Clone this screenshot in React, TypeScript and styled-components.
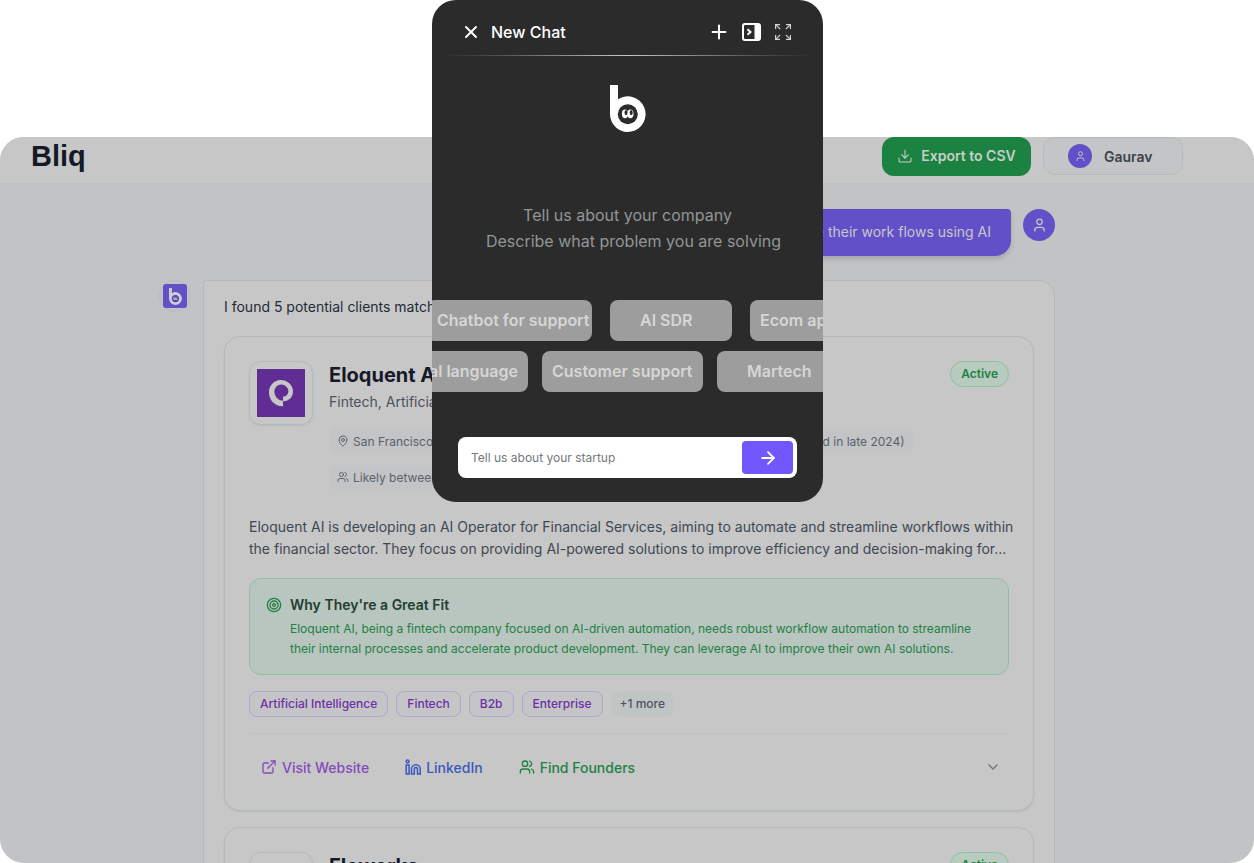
import React from "react";
import styled, { createGlobalStyle, css } from "styled-components";
import {
  ArrowRight,
  ChevronDown,
  Download,
  ExternalLink,
  MapPin,
  Plus,
  Target,
  Users,
  X,
} from "lucide-react";

const GlobalStyle = createGlobalStyle`
  *, *::before, *::after { box-sizing: border-box; }
  body { margin: 0; background: #ffffff; font-family: Inter, "Liberation Sans", sans-serif; }
  h1, h2, h3, p, ul { margin: 0; padding: 0; }
  button, input { font: inherit; }
  button { border: 0; padding: 0; background: none; color: inherit; cursor: pointer; }
  a { color: inherit; text-decoration: none; }
  svg { flex: none; display: block; }
`;

const Page = styled.div`
  position: relative;
  display: flex;
  flex-direction: column;
  height: 100vh;
  padding-top: 137px;
  overflow: hidden;
`;

const AppWindow = styled.div`
  flex: 1;
  min-height: 0;
  overflow: hidden;
  border-radius: 24px;
  background: #c2c3c5;
`;

const Header = styled.header`
  display: flex;
  align-items: flex-start;
  gap: 12px;
  height: 47px;
  padding: 0 71px 0 31px;
  background: #c7c7c7;
  border-bottom: 1px solid #bfc2c3;
`;

const Brand = styled.h1`
  flex: 1;
  color: #151a28;
  font: 700 29px/38px "Liberation Sans", sans-serif;
`;

const ExportButton = styled.button`
  display: flex;
  align-items: center;
  justify-content: center;
  gap: 8px;
  width: 149px;
  height: 39px;
  padding-bottom: 2px;
  border-radius: 12px;
  background: #1b8241;
  color: #c7cfc9;
  font-size: 14px;
  font-weight: 600;
`;

const AccountButton = styled.button`
  display: flex;
  align-items: center;
  gap: 12px;
  width: 140px;
  height: 38px;
  padding-left: 24px;
  border: 1px solid #b4bbbc;
  border-radius: 12px;
  background: #c4c5c6;
  color: #3c434c;
  font-size: 14px;
  font-weight: 600;
`;

const UserAvatar = styled.span<{ $size: number }>`
  flex: none;
  display: flex;
  align-items: center;
  justify-content: center;
  width: ${(p) => p.$size}px;
  height: ${(p) => p.$size}px;
  border-radius: 50%;
  background: #6250c8;
  color: #c7c7c7;
`;

const Scroller = styled.main`
  padding: 25px 40px 0 0;
`;

const Thread = styled.div`
  display: flex;
  flex-direction: column;
  gap: 24px;
  max-width: 896px;
  margin: 0 auto;
`;

const Message = styled.div<{ $mine?: boolean }>`
  display: flex;
  align-items: flex-start;
  justify-content: ${(p) => (p.$mine ? "flex-end" : "flex-start")};
  gap: 12px;
`;

const Bubble = styled.p`
  padding: 11px 20px 12px;
  border-radius: 16px 4px 16px 16px;
  background: #6250c8;
  box-shadow: 0 3px 5px rgba(70, 85, 85, 0.25);
  color: #c7c7c7;
  font-size: 14px;
  line-height: 24px;
`;

const BotAvatar = styled.span`
  flex: none;
  display: flex;
  align-items: center;
  justify-content: center;
  width: 32px;
  height: 32px;
  border: 1px solid #b7bbbe;
  border-radius: 50%;
`;

const BotTile = styled.span`
  display: flex;
  align-items: center;
  justify-content: center;
  width: 24px;
  height: 24px;
  border-radius: 3px;
  background: #6250c8;
`;

const Panel = styled.section`
  flex: 1;
  min-width: 0;
  padding: 14px 20px 20px;
  border: 1px solid #b1babb;
  border-radius: 4px 16px 16px 16px;
  background: #c7c7c7;
`;

const Intro = styled.p`
  margin-bottom: 17px;
  color: #242b36;
  font-size: 14px;
  line-height: 24px;
`;

const Card = styled.article`
  margin-bottom: 16px;
  padding: 24px;
  border: 1px solid #b1bbba;
  border-radius: 16px;
  background: #c7c7c7;
  box-shadow: 0 1px 2px rgba(70, 85, 85, 0.12);
`;

const CardTop = styled.div`
  display: flex;
  align-items: flex-start;
  gap: 16px;
`;

const LogoBox = styled.div`
  flex: none;
  display: flex;
  align-items: center;
  justify-content: center;
  width: 64px;
  height: 64px;
  border: 1px solid #b1bbba;
  border-radius: 12px;
  box-shadow: 0 1px 2px rgba(70, 85, 85, 0.12);
`;

const CardInfo = styled.div`
  flex: 1;
  min-width: 0;
`;

const CardTitle = styled.h2`
  color: #151a28;
  font-size: 20px;
  font-weight: 700;
  line-height: 28px;
`;

const CardSubtitle = styled.p`
  margin-bottom: 14px;
  color: #4a525c;
  font-size: 14px;
  line-height: 26px;
`;

const Facts = styled.ul`
  display: flex;
  flex-wrap: wrap;
  gap: 12px;
  list-style: none;
`;

const Fact = styled.li<{ $fill?: boolean }>`
  display: flex;
  align-items: center;
  gap: 4px;
  height: 24px;
  padding: 0 8px;
  border-radius: 6px;
  background: #c2c4c5;
  color: #5a626b;
  font-size: 12px;
  white-space: nowrap;
  ${(p) =>
    p.$fill &&
    css`
      justify-content: flex-end;
      width: 353px;
    `}
`;

const Status = styled.span`
  height: 26px;
  padding: 0 10px;
  border: 1px solid #8fc1a2;
  border-radius: 13px;
  background: #b7cbbf;
  color: #1e8043;
  font-size: 12px;
  font-weight: 600;
  line-height: 24px;
`;

const Summary = styled.p`
  margin-top: 27px;
  color: #3f4751;
  font-size: 14px;
  line-height: 22px;
  white-space: nowrap;
`;

const FitBox = styled.section`
  display: flex;
  gap: 8px;
  margin-top: 18px;
  padding: 16px 16px 15px;
  border: 1px solid #91bfa3;
  border-radius: 12px;
  background: #b9c5bf;
  color: #228145;

  > svg {
    margin-top: 2px;
  }
`;

const FitTitle = styled.h3`
  margin-bottom: 4px;
  color: #213f30;
  font-size: 14px;
  font-weight: 600;
  line-height: 20px;
`;

const FitText = styled.p`
  font-size: 12px;
  line-height: 20px;
  white-space: nowrap;
`;

const Chips = styled.ul`
  display: flex;
  gap: 8px;
  margin-top: 16px;
  list-style: none;
`;

const Chip = styled.li<{ $muted?: boolean }>`
  height: 26px;
  padding: 0 ${(p) => (p.$muted ? 8 : 10)}px;
  border: 1px solid ${(p) => (p.$muted ? "#c1c4c5" : "#b5a5cc")};
  border-radius: 8px;
  background: ${(p) => (p.$muted ? "#c1c4c5" : "#c4c5c6")};
  color: ${(p) => (p.$muted ? "#4c545e" : "#6c2fa6")};
  font-size: 12px;
  font-weight: 500;
  line-height: 24px;
`;

const CardActions = styled.footer`
  display: flex;
  align-items: center;
  gap: 12px;
  margin-top: 16px;
  padding: 15px 0 1px;
  border-top: 1px solid #bfc2c3;
`;

const ActionLink = styled.a<{ $tone: string }>`
  display: flex;
  align-items: center;
  gap: 5px;
  height: 36px;
  padding: 0 12px;
  color: ${(p) => p.$tone};
  font-size: 14px;
  font-weight: 500;
`;

const ExpandCard = styled.button`
  display: flex;
  align-items: center;
  justify-content: center;
  width: 32px;
  height: 36px;
  margin-left: auto;
  color: #6d747c;
`;

const Overlay = styled.div`
  position: absolute;
  inset: 0;
  display: flex;
  align-items: flex-start;
  justify-content: center;
  padding-left: 1px;
`;

const Dialog = styled.section`
  display: flex;
  flex-direction: column;
  width: 391px;
  overflow: hidden;
  border-radius: 24px;
  background: #2b2b2b;
  color: #ffffff;
`;

const DialogHeader = styled.header`
  display: flex;
  align-items: center;
  height: 55px;
  padding: 8px 30px 0 29px;
`;

const DialogTitle = styled.h2`
  flex: 1;
  margin-left: 10px;
  font-size: 16px;
  font-weight: 500;
  line-height: 24px;
`;

const IconButton = styled.button`
  display: flex;
  align-items: center;
  justify-content: center;
  width: 20px;
  height: 24px;
`;

const Tools = styled.div`
  display: flex;
  gap: 12px;
`;

const Rule = styled.div`
  height: 1px;
  margin: 0 12px;
  background: linear-gradient(90deg, #2b2b2b, #5c6165 20%, #c4c8c8 50%, #5c6165 80%, #2b2b2b);
`;

const DialogLogo = styled.div`
  display: flex;
  justify-content: center;
  padding-top: 29px;
`;

const Prompt = styled.div`
  margin-top: 70px;
  color: #919697;
  font-size: 16px;
  line-height: 26px;
  text-align: center;
`;

const PromptDetail = styled.p`
  padding-left: 12px;
`;

const Suggestions = styled.div<{ $shift: number; $gap: number }>`
  display: flex;
  gap: ${(p) => p.$gap}px;
  margin-left: -${(p) => p.$shift}px;
`;

const SuggestionArea = styled.div`
  display: flex;
  flex-direction: column;
  gap: 10px;
  margin-top: 46px;
`;

const Suggestion = styled.button<{ $width: number; $inset?: number }>`
  flex: none;
  width: ${(p) => p.$width}px;
  height: 41px;
  padding: 0 0 1px ${(p) => p.$inset ?? 10}px;
  border-radius: 8px;
  background: #9d9d9d;
  color: #d6d6d6;
  font-size: 16px;
  font-weight: 600;
  text-align: left;
  white-space: nowrap;
`;

const Composer = styled.form`
  display: flex;
  align-items: center;
  height: 41px;
  margin: 45px 26px 24px;
  padding: 4px;
  border-radius: 8px;
  background: #ffffff;
`;

const ComposerInput = styled.input`
  flex: 1;
  min-width: 0;
  padding: 0 9px;
  border: 0;
  outline: 0;
  background: transparent;
  color: #2b2b2b;
  font-size: 12px;

  &::placeholder {
    color: #74787b;
    opacity: 1;
  }
`;

const SendButton = styled.button`
  display: flex;
  align-items: center;
  justify-content: center;
  width: 51px;
  height: 33px;
  border-radius: 4px;
  background: #7257ff;
  color: #ffffff;
`;

const BliqMark = ({ width, height, color, hole }: { width: number; height: number; color: string; hole: string }) => (
  <svg width={width} height={height} viewBox="0 0 36 47" aria-hidden="true">
    <path d="M0 0h8v14.3A17.8 17.8 0 1 1 0 29.2z" fill={color} />
    <circle cx="17.8" cy="29.2" r="10" fill={hole} />
    <ellipse cx="15" cy="28.8" rx="3.1" ry="4.4" fill={color} />
    <ellipse cx="20.4" cy="28.8" rx="3.1" ry="4.4" fill={color} />
    <ellipse cx="16" cy="27.6" rx="1.5" ry="2.6" fill={hole} />
    <ellipse cx="21.2" cy="27.6" rx="1.5" ry="2.6" fill={hole} />
  </svg>
);

const PersonIcon = ({ size }: { size: number }) => (
  <svg width={size} height={size} viewBox="0 0 16 16" fill="none" stroke="currentColor" strokeWidth="1.4" aria-hidden="true">
    <circle cx="8" cy="4" r="2.9" />
    <path d="M3 14.500v-1.600A2.900 2.900 0 0 1 5.900 10h4.200A2.900 2.900 0 0 1 13 12.900v1.600" />
  </svg>
);

const EloquentLogo = () => (
  <svg width="48" height="48" viewBox="0 0 48 48" role="img" aria-label="Eloquent AI">
    <rect width="48" height="48" fill="#602d95" />
    <path
      fillRule="evenodd"
      fill="#c7c7c7"
      d="M26 37.3C18 37.5 12 31.3 12 23.6A12 12 0 0 1 36 22.3C36 28.5 31.5 32.5 26 32.2zM26 31.8V27.8C29.5 27.5 31.4 25.3 31.4 22.3A7 7 0 0 0 17.4 22.6C17.4 27.4 21.2 31.8 26 31.8z"
    />
  </svg>
);

const LinkedInIcon = () => (
  <svg width="16" height="16" viewBox="0 0 16 16" fill="none" stroke="currentColor" strokeWidth="1.5" aria-hidden="true">
    <circle cx="2.6" cy="2.4" r="1.4" />
    <path d="M1.2 5.900h2.900v9.200H1.200z" />
    <path d="M6.500 15.100V10.200a4.400 4.400 0 0 1 8.800 0v4.900h-2.800v-4.900a1.600 1.600 0 0 0-3.200 0v4.900z" />
  </svg>
);

const PanelIcon = () => (
  <svg width="19" height="18" viewBox="0 0 19 18" aria-hidden="true">
    <rect x="1" y="1" width="17" height="16" rx="2" fill="none" stroke="#fff" strokeWidth="2" />
    <path d="M12.500 1H17a1 1 0 0 1 1 1v14a1 1 0 0 1-1 1h-4.500z" fill="#fff" />
    <path d="M5.500 6.200 8.500 9l-3 2.800" fill="none" stroke="#fff" strokeWidth="2" />
  </svg>
);

const ExpandIcon = () => (
  <svg width="16" height="16" viewBox="0 0 16 16" fill="none" stroke="#d5d5d5" strokeWidth="1.2" aria-hidden="true">
    <path d="M.6 5V.6H5M11 .6h4.400V5M15.400 11v4.400H11M5 15.400H.6V11" />
    <path d="M.6.6 5.200 5.200M15.400.6l-4.600 4.600M15.400 15.400l-4.600-4.600M.6 15.400l4.600-4.600" />
  </svg>
);

const tags = ["Artificial Intelligence", "Fintech", "B2b", "Enterprise"];

export default function App() {
  return (
    <>
      <GlobalStyle />
      <Page>
        <AppWindow>
          <Header>
            <Brand>Bliq</Brand>
            <ExportButton type="button">
              <Download size={16} strokeWidth={1.6} />
              Export to CSV
            </ExportButton>
            <AccountButton type="button">
              <UserAvatar $size={24}>
                <PersonIcon size={11} />
              </UserAvatar>
              Gaurav
            </AccountButton>
          </Header>
          <Scroller>
            <Thread>
              <Message $mine>
                <Bubble>automate their work flows using AI</Bubble>
                <UserAvatar $size={32}>
                  <PersonIcon size={15} />
                </UserAvatar>
              </Message>
              <Message>
                <BotAvatar>
                  <BotTile>
                    <BliqMark width={13} height={17} color="#cfcdd8" hole="#5545a8" />
                  </BotTile>
                </BotAvatar>
                <Panel>
                  <Intro>I found 5 potential clients matching</Intro>
                  <Card>
                    <CardTop>
                      <LogoBox>
                        <EloquentLogo />
                      </LogoBox>
                      <CardInfo>
                        <CardTitle>Eloquent AI</CardTitle>
                        <CardSubtitle>Fintech, Artificial Intelligence</CardSubtitle>
                        <Facts>
                          <Fact>
                            <MapPin size={12} />
                            San Francisco, CA, United States
                          </Fact>
                          <Fact $fill>Seed (founded in late 2024)</Fact>
                          <Fact>
                            <Users size={12} />
                            Likely between 1-10 employees
                          </Fact>
                        </Facts>
                      </CardInfo>
                      <Status>Active</Status>
                    </CardTop>
                    <Summary>
                      Eloquent AI is developing an AI Operator for Financial Services, aiming to automate and streamline workflows within
                      <br />
                      the financial sector. They focus on providing AI-powered solutions to improve efficiency and decision-making for...
                    </Summary>
                    <FitBox>
                      <Target size={16} />
                      <div>
                        <FitTitle>Why They're a Great Fit</FitTitle>
                        <FitText>
                          Eloquent AI, being a fintech company focused on AI-driven automation, needs robust workflow automation to streamline
                          <br />
                          their internal processes and accelerate product development. They can leverage AI to improve their own AI solutions.
                        </FitText>
                      </div>
                    </FitBox>
                    <Chips>
                      {tags.map((tag) => (
                        <Chip key={tag}>{tag}</Chip>
                      ))}
                      <Chip $muted>+1 more</Chip>
                    </Chips>
                    <CardActions>
                      <ActionLink href="#website" $tone="#854cbd">
                        <ExternalLink size={16} />
                        Visit Website
                      </ActionLink>
                      <ActionLink href="#linkedin" $tone="#3a58bd">
                        <LinkedInIcon />
                        LinkedIn
                      </ActionLink>
                      <ActionLink href="#founders" $tone="#228145">
                        <Users size={16} />
                        Find Founders
                      </ActionLink>
                      <ExpandCard type="button" aria-label="Show details">
                        <ChevronDown size={16} />
                      </ExpandCard>
                    </CardActions>
                  </Card>
                  <Card>
                    <CardTop>
                      <LogoBox />
                      <CardInfo>
                        <CardTitle>Floworks</CardTitle>
                      </CardInfo>
                      <Status>Active</Status>
                    </CardTop>
                  </Card>
                </Panel>
              </Message>
            </Thread>
          </Scroller>
        </AppWindow>
        <Overlay>
          <Dialog role="dialog" aria-label="New Chat">
            <DialogHeader>
              <IconButton type="button" aria-label="Close">
                <X size={20} strokeWidth={2.4} />
              </IconButton>
              <DialogTitle>New Chat</DialogTitle>
              <Tools>
                <IconButton type="button" aria-label="Add">
                  <Plus size={22} strokeWidth={2.2} />
                </IconButton>
                <IconButton type="button" aria-label="Dock panel">
                  <PanelIcon />
                </IconButton>
                <IconButton type="button" aria-label="Expand">
                  <ExpandIcon />
                </IconButton>
              </Tools>
            </DialogHeader>
            <Rule />
            <DialogLogo>
              <BliqMark width={36} height={47} color="#ffffff" hole="#2b2b2b" />
            </DialogLogo>
            <Prompt>
              <p>Tell us about your company</p>
              <PromptDetail>Describe what problem you are solving</PromptDetail>
            </Prompt>
            <SuggestionArea>
              <Suggestions $shift={5} $gap={18}>
                <Suggestion type="button" $width={165}>Chatbot for support</Suggestion>
                <Suggestion type="button" $width={122} $inset={30}>AI SDR</Suggestion>
                <Suggestion type="button" $width={102}>Ecom apps</Suggestion>
              </Suggestions>
              <Suggestions $shift={56} $gap={14}>
                <Suggestion type="button" $width={152}>Natural language</Suggestion>
                <Suggestion type="button" $width={161}>Customer support</Suggestion>
                <Suggestion type="button" $width={123} $inset={30}>Martech</Suggestion>
              </Suggestions>
            </SuggestionArea>
            <Composer onSubmit={(e: React.FormEvent) => e.preventDefault()}>
              <ComposerInput type="text" aria-label="Tell us about your startup" placeholder="Tell us about your startup" />
              <SendButton type="submit" aria-label="Send">
                <ArrowRight size={20} strokeWidth={2.2} />
              </SendButton>
            </Composer>
          </Dialog>
        </Overlay>
      </Page>
    </>
  );
}
